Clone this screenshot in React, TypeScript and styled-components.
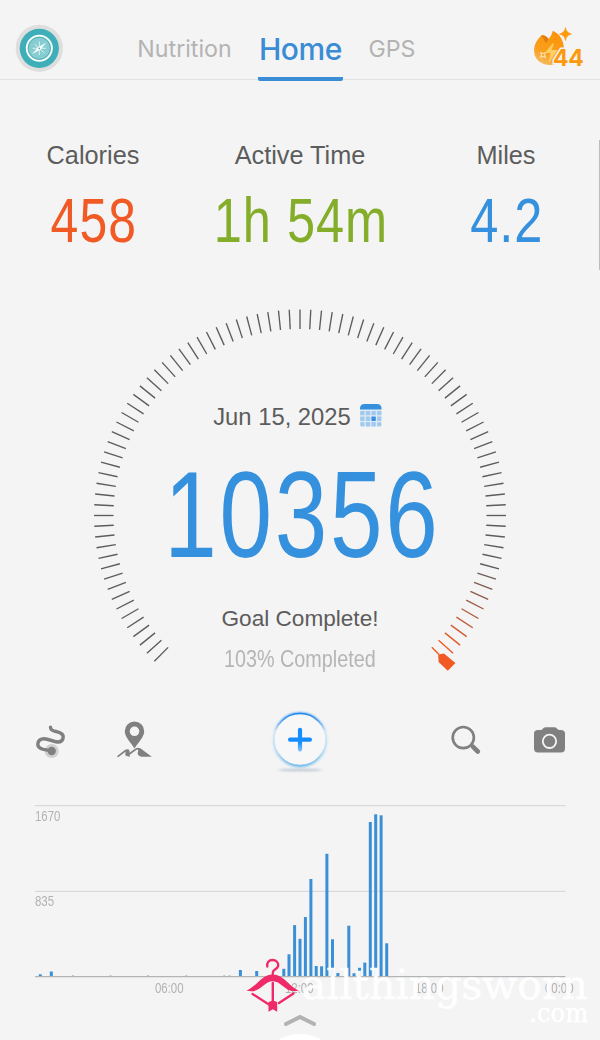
import React from "react";
import styled, { createGlobalStyle } from "styled-components";

const GlobalStyle = createGlobalStyle`
  * { box-sizing: border-box; }
  html, body { margin: 0; padding: 0; background: #f4f4f4; }
  body { font-family: "Liberation Sans", Arial, sans-serif; }
  svg { display: block; }
`;

const Screen = styled.main`
  position: relative;
  width: 600px;
  height: 1040px;
  overflow: hidden;
  background: #f4f4f4;
  display: flex;
  flex-direction: column;
`;

const Header = styled.header`
  height: 80px;
  flex: none;
  display: grid;
  grid-template-columns: 95px 330px 54px;
  justify-content: space-between;
  border-bottom: 1px solid #e2e2e2;
  padding: 0 14px 0 15px;
`;

const AvatarButton = styled.div`
  width: 48px;
  padding-top: 24px;
`;

const Tabs = styled.nav`
  display: flex;
  height: 81px;
  margin-left: -45px;
  font-family: Inter, sans-serif;
`;

const Tab = styled.a<{ $active?: boolean; $width: number }>`
  width: ${(p) => p.$width}px;
  height: 81px;
  display: flex;
  justify-content: center;
  white-space: nowrap;
  line-height: 40px;
  padding-top: 29px;
  font-size: ${(p) => (p.$active ? 30 : 23.2)}px;
  font-weight: ${(p) => (p.$active ? 500 : 400)};
  letter-spacing: ${(p) => (p.$active ? -0.4 : 0)}px;
  color: ${(p) => (p.$active ? "#3a8cd6" : "#b3b3b3")};
  background: ${(p) => (p.$active ? "linear-gradient(#3a8cd6, #3a8cd6) bottom / 100% 4px no-repeat" : "none")};
  border-radius: 2px;
`;

const Streak = styled.div`
  position: relative;
  width: 54px;
  padding-top: 26px;
`;

const StreakCount = styled.span`
  position: absolute;
  left: 21px;
  top: 45px;
  font: 700 23px/26px Inter, sans-serif;
  letter-spacing: -0.2px;
  color: #fb990f;
  -webkit-text-stroke: 3px #f4f4f4;
  paint-order: stroke fill;
`;

const Stats = styled.section`
  display: grid;
  grid-template-columns: 186px 228px 184px;
  padding-top: 60px;
  height: 220px;
  flex: none;
`;

const Stat = styled.div`
  display: flex;
  flex-direction: column;
  align-items: center;
  gap: 18px;
`;

const StatLabel = styled.div`
  font-size: 25.3px;
  line-height: 30px;
  color: #5c5c5c;
  white-space: nowrap;
`;

const Narrow = styled.div<{ $size: number; $line: number; $color: string; $scale?: number; $spacing?: number }>`
  font-size: ${(p) => p.$size}px;
  line-height: ${(p) => p.$line}px;
  height: ${(p) => p.$line}px;
  letter-spacing: ${(p) => p.$spacing ?? 0}px;
  margin-right: ${(p) => -(p.$spacing ?? 0)}px;
  color: ${(p) => p.$color};
  white-space: nowrap;
  transform: scaleX(${(p) => p.$scale ?? 0.83});
`;

const Gauge = styled.section`
  display: grid;
  height: 390px;
  flex: none;
  > * { grid-area: 1 / 1; }
`;

const GaugeText = styled.div`
  display: flex;
  flex-direction: column;
  align-items: center;
  padding-top: 102px;
`;

const DateRow = styled.div`
  display: flex;
  gap: 8px;
  height: 30px;
  font-size: 23.8px;
  line-height: 30px;
  color: #5c5c5c;
  padding-right: 4px;
`;

const GoalText = styled.div`
  font-size: 22.6px;
  line-height: 30px;
  color: #5c5c5c;
  margin: 39px 0 10px;
`;

const StepCount = styled.div`
  padding: 33px 0 0 2px;
`;

const Actions = styled.section`
  display: grid;
  grid-template-columns: 84px 146px 186px 86px 44px;
  align-items: start;
  height: 105px;
  flex: none;
  padding: 30px 0 0 30px;
`;

const ActivityChart = styled.section`
  display: grid;
  height: 205px;
  flex: none;
  > * { grid-area: 1 / 1; }
`;

const YLabels = styled.div`
  padding: 13.5px 0 0 35px;
  display: flex;
  flex-direction: column;
  align-items: flex-start;
  gap: 69.5px;
  > * { transform-origin: left; }
`;

const XLabels = styled.div`
  display: grid;
  grid-template-columns: repeat(4, 130px);
  justify-items: center;
  padding: 186.4px 0 0 104.5px;
`;

const Footer = styled.footer`
  height: 40px;
  flex: none;
`;

const Watermark = styled.div`
  position: absolute;
  left: 245px;
  top: 955px;
  width: 355px;
  height: 80px;
  color: rgba(255, 255, 255, 0.95);
  font-family: "DejaVu Serif", serif;
`;

const WatermarkName = styled.span`
  position: absolute;
  right: 12px;
  top: 5px;
  font-size: 41px;
  line-height: 50px;
  -webkit-text-stroke: 0.5px rgba(255, 255, 255, 0.95);
`;

const WatermarkSuffix = styled.span`
  position: absolute;
  right: 12px;
  top: 42px;
  font-size: 26.5px;
  line-height: 32px;
  transform: scaleX(0.92);
  transform-origin: right;
  -webkit-text-stroke: 0.4px rgba(255, 255, 255, 0.95);
`;

const WatermarkLogo = styled.svg`
  position: absolute;
  left: 0;
  top: 0;
`;

const ScrollThumb = styled.div`
  position: absolute;
  right: 0;
  top: 140px;
  width: 1px;
  height: 130px;
  background: #bcbcbc;
`;

const CompassIcon = () => (
  <svg width="48" height="48" viewBox="0 0 48 48">
    <circle cx="24.3" cy="24.3" r="23.6" fill="#dedede" />
    <circle cx="24.3" cy="24.3" r="19.6" fill="#3eafb8" />
    <circle cx="24.3" cy="24.3" r="12.6" fill="#86cdd1" stroke="#fff" strokeWidth="1.8" />
    <circle cx="24.3" cy="24.3" r="11" fill="none" stroke="#49aeb6" strokeWidth="0.9" />
    <path d="M31.5 18.500 25.500 25.500 17 30.300 23 23.300Z" fill="#fff" opacity=".95" />
    <path d="M19.500 20 29.300 29M24.300 17.500V31M17.800 24.300H30.800" stroke="#fff" strokeWidth=".8" opacity=".9" />
    <circle cx="24.3" cy="24.3" r="0.9" fill="#49aeb6" />
  </svg>
);

const FlameIcon = () => (
  <svg width="54" height="42" viewBox="0 0 54 42">
    <defs>
      <linearGradient id="flame" x1="0.7" y1="0" x2="0.3" y2="1">
        <stop offset="0" stopColor="#fb9208" />
        <stop offset=".65" stopColor="#fb9f1c" />
        <stop offset="1" stopColor="#f3bd63" />
      </linearGradient>
    </defs>
    <path d="M9.500 9.200C5 13.500 1.800 18.600 2.100 25.500c.4 8 7 13.500 16 13.500 9 0 14-7 14-15C32.100 16 28.500 8 20.800 4.800 20 8.500 18.500 11 16.500 13 15 10.500 12.500 9 9.500 9.200Z" fill="url(#flame)" />
    <path d="M9.500 9.200c3-.2 5.500 1.300 7 3.800l-2.500 4Z" fill="#dc7e10" />
    <path d="M20.500 17.500 13 27h5.500l-2 10.500L25.500 24h-6l2.500-6.500Z" fill="#ffcf66" />
    <path d="m8.500 26.500 2.500 1 2.500-1-1 2.500 1 2.500-2.500-1-2.500 1 1-2.500Z" fill="#f9a83a" stroke="#fff0c8" strokeWidth=".9" />
    <path d="M33.500 1.500c.9 3.800 2 5.200 6 6.500-4 1.300-5.100 2.700-6 6.500-.9-3.800-2-5.200-6-6.500 4-1.300 5.100-2.700 6-6.500Z" fill="#fb990f" stroke="#fb990f" strokeWidth=".6" />
  </svg>
);

const CalendarIcon = () => {
  const cells: React.ReactNode[] = [];
  for (let r = 0; r < 3; r++)
    for (let c = 0; c < 4; c++) {
      const corner = r === 2 && (c === 0 || c === 3);
      cells.push(
        <rect key={`${r}-${c}`} x={1.2 + c * 5.6} y={8.9 + r * 5.6} width="4.4" height="4.4" rx={corner ? 1.6 : 0.4}
          fill={r === 1 && c === 2 ? "#3590dd" : "#a3c9ec"} />
      );
    }
  return (
    <svg width="24" height="26" viewBox="0 0 24 26">
      <rect x="1" y="6" width="21.600" height="18.800" rx="4" fill="#deebf7" />
      <path d="M1 7V6.500Q1 2 5.500 2H18Q22.500 2 22.500 6.500V7.500H1Z" fill="#3590dd" />
      {cells}
    </svg>
  );
};

const mix = (t: number) => {
  const from = [92, 92, 92];
  const to = [241, 90, 36];
  return `rgb(${from.map((v, i) => Math.round(v + (to[i] - v) * t)).join(",")})`;
};

const GaugeDial = () => {
  const ticks: React.ReactNode[] = [];
  for (let i = -45; i <= 44; i++) {
    const t = Math.min(1, Math.max(0, (i - 35) / 9));
    ticks.push(
      <line key={i} x1="300" y1="9.500" x2="300" y2="29" stroke={mix(t)} strokeWidth="1.350" transform={`rotate(${i * 3} 300 215.500)`} />
    );
  }
  return (
    <svg width="600" height="390" viewBox="0 0 600 390">
      {ticks}
      <path d="M431.800 347.300 439 354.500" stroke="#f15a24" strokeWidth="1.400" />
      <path d="M438.200 354.500 444 353.400 455.400 363 447.800 370.800 438.600 362Z" fill="#f15a24" />
    </svg>
  );
};

const RouteIcon = () => (
  <svg width="44" height="60" viewBox="0 0 44 60">
    <circle cx="21.700" cy="31" r="7" fill="#d0d0d0" />
    <path d="M20.500 7.300c.3 3 2.500 3.600 5.500 4.200 5 1 8 3 7 7-1 3.700-4 4-8 3l-7-2c-5-1.500-9-.5-10 3.300-.9 4 1.800 5.700 5.500 6.500l8 1.500" fill="none" stroke="#808080" strokeWidth="3.400" strokeLinecap="round" />
    <circle cx="21.700" cy="31" r="4.200" fill="#808080" />
  </svg>
);

const PinIcon = () => (
  <svg width="44" height="60" viewBox="0 0 44 60">
    <g transform="translate(-4 -10)">
      <path fillRule="evenodd" d="M24.500 11.500a9.700 9.700 0 0 0-9.700 9.700c0 6 6 11 9.700 17.300 3.700-6.300 9.700-11.300 9.700-17.300a9.700 9.700 0 0 0-9.700-9.700Zm0 5a4.800 4.800 0 1 1 0 9.600 4.800 4.800 0 0 1 0-9.600Z" fill="#808080" />
      <path d="M8 46.300 15 41c2.500-1.800 3.800-.8 3.800.5 0 1.700-1.600 3.500.2 4.500M18.500 44.500 25.500 39.500c2-1.500 4-1.200 6 .5" fill="none" stroke="#808080" strokeWidth="1.600" strokeLinecap="round" />
      <path d="M15 41c2.500-1.500 4-.5 3.600 1-.5 1.700-.7 3 1.700 3.500-2.500 1.500-5.300.7-5-1.500.1-1.500.7-2-.3-3ZM27 39c3-1 4.500 0 7 2l7.800 5.800H31c-3-1-4-3-3-5 .4-1.300.3-2-1-2.800Z" fill="#808080" />
    </g>
  </svg>
);

const AddButton = () => (
  <svg width="80" height="70" viewBox="0 0 80 70" overflow="visible">
    <defs>
      <linearGradient id="ring" x1="0" y1="0" x2="0" y2="1">
        <stop offset="0" stopColor="#2388ee" />
        <stop offset=".12" stopColor="#4b9ff0" />
        <stop offset=".35" stopColor="#d3e6f5" />
        <stop offset=".7" stopColor="#bfe0f3" />
        <stop offset="1" stopColor="#7fc0ea" />
      </linearGradient>
      <linearGradient id="plus" x1="0" y1="8" x2="0" y2="32" gradientUnits="userSpaceOnUse">
        <stop offset="0" stopColor="#148cff" />
        <stop offset=".6" stopColor="#168fff" />
        <stop offset="1" stopColor="#8cc8fb" />
      </linearGradient>
      <filter id="soft" x="-30%" y="-30%" width="160%" height="160%"><feGaussianBlur stdDeviation="1.200" /></filter>
      <filter id="shade" x="-30%" y="-200%" width="160%" height="500%"><feGaussianBlur stdDeviation="2.500 0.800" /></filter>
    </defs>
    <ellipse cx="40" cy="50" rx="22" ry="1.300" fill="#9bacbf" opacity=".6" filter="url(#shade)" />
    <circle cx="40" cy="20" r="26" fill="#f7f7f7" stroke="url(#ring)" strokeWidth="2.800" filter="url(#soft)" />
    <circle cx="40" cy="19.500" r="26" fill="#f7f7f7" stroke="url(#ring)" strokeWidth="1.500" />
    <rect x="28" y="17.600" width="24" height="4.200" rx="2.100" fill="#148cff" />
    <rect x="37.900" y="7.700" width="4.200" height="24" rx="2.100" fill="url(#plus)" />
  </svg>
);

const SearchIcon = () => (
  <svg width="44" height="60" viewBox="0 0 44 60">
    <circle cx="17.300" cy="17.600" r="10.600" fill="none" stroke="#808080" strokeWidth="2.700" />
    <path d="m24.600 24.500 1.500 1.500" stroke="#808080" strokeWidth="2.500" />
    <path d="m27.100 26.800 4.700 4.700" stroke="#808080" strokeWidth="4.600" strokeLinecap="round" />
  </svg>
);

const CameraIcon = () => (
  <svg width="44" height="60" viewBox="0 0 44 60">
    <g transform="translate(-2 -10)">
      <path d="M8 42.500q-4 0-4-4V23.500q0-3.500 4-3.500h2.500q1.500 0 2.500-1.500 1-1.300 3-1.300h8q2 0 3 1.300 1 1.500 2.500 1.500H31q4 0 4 3.500v15q0 4-4 4Z" fill="#808080" />
      <circle cx="19.500" cy="31.300" r="6.700" fill="#808080" stroke="#f4f4f4" strokeWidth="1.800" />
    </g>
  </svg>
);

const bars: [number, number][] = [
  [40.3, 2], [51.3, 4.800], [240.4, 6.300], [256.700, 5.300], [283.800, 7.500], [289, 22], [294.600, 51.200], [300, 37.500],
  [305.400, 59.300], [310.900, 97.300], [316.200, 10.300], [321.600, 10], [326.900, 122.500], [332.500, 37], [337.900, 3.300],
  [348.800, 50.600], [354, 3], [359.500, 8.500], [364.800, 13.700], [370.300, 154.300], [375.700, 162], [381.100, 161], [386.700, 33],
];

const BarPlot = () => (
  <svg width="600" height="205" viewBox="0 0 600 205">
    <path d="M35 10.600H565.500M35 96.300H565.500" stroke="#d9d9d9" strokeWidth="1.200" />
    {bars.map(([x, h]) => (
      <rect key={x} x={x - 1.5} y={181.300 - h} width="3" height={h} fill="#3b8fd6" />
    ))}
    <path d="M35 181.600H565.500" stroke="#b2b5b8" strokeWidth="1.200" />
    {[73, 110.5, 148, 186.3, 224.3, 229.5].map((x) => (
      <rect key={x} x={x - 1} y="180.300" width="2" height="1.500" fill="#a9b4bd" />
    ))}
  </svg>
);

const HangerLogo = () => (
  <WatermarkLogo width="60" height="60" viewBox="0 0 60 60">
    <g fill="none" stroke="#ee2a68" strokeLinecap="round">
      <path d="M22.300 11.500C21.600 7.500 24 5 27.500 5c3.500 0 5.700 2.300 5.700 5.200 0 4.300-5.400 3.800-5.400 7.300v3" strokeWidth="2.300" />
      <path d="M27.800 28V48" strokeWidth="2.400" />
      <path d="M7.500 39 23.500 49.300M48.500 38.500 34 48" strokeWidth="2.300" />
    </g>
    <path d="M1.500 35.500C12 31.500 16.500 19.500 27.800 19.500S43.500 31.500 54 35.500C40.500 39.500 37.500 26.300 27.800 26.300S15 39.500 1.500 35.500Z" fill="#ee2a68" />
    <path d="M23.500 47 27.800 45.500l4.400 1.500V56.700l-4.400-2.400-4.300 2.400Z" fill="#ee2a68" />
  </WatermarkLogo>
);

export default function App() {
  return (
    <>
      <GlobalStyle />
      <Screen>
        <Header>
          <AvatarButton><CompassIcon /></AvatarButton>
          <Tabs>
            <Tab $width={147}>Nutrition</Tab>
            <Tab $active $width={85}>Home</Tab>
            <Tab $width={98}>GPS</Tab>
          </Tabs>
          <Streak>
            <FlameIcon />
            <StreakCount>44</StreakCount>
          </Streak>
        </Header>

        <Stats>
          <Stat>
            <StatLabel>Calories</StatLabel>
            <Narrow $size={63.2} $line={64} $scale={0.79} $spacing={1.4} $color="#f15a24">458</Narrow>
          </Stat>
          <Stat>
            <StatLabel>Active Time</StatLabel>
            <Narrow $size={63.2} $line={64} $scale={0.8} $spacing={1.2} $color="#84ae2a">1h 54m</Narrow>
          </Stat>
          <Stat>
            <StatLabel>Miles</StatLabel>
            <Narrow $size={63.2} $line={64} $scale={0.8} $spacing={1.2} $color="#3590dd">4.2</Narrow>
          </Stat>
        </Stats>

        <Gauge>
          <GaugeDial />
          <GaugeText>
            <DateRow>
              <span>Jun 15, 2025</span>
              <CalendarIcon />
            </DateRow>
            <StepCount>
              <Narrow $size={121.8} $line={100} $scale={0.775} $spacing={3.6} $color="#3590dd">10356</Narrow>
            </StepCount>
            <GoalText>Goal Complete!</GoalText>
            <Narrow $size={23.7} $line={30} $scale={0.835} $color="#b5b5b5">103% Completed</Narrow>
          </GaugeText>
        </Gauge>

        <Actions>
          <RouteIcon />
          <PinIcon />
          <AddButton />
          <SearchIcon />
          <CameraIcon />
        </Actions>

        <ActivityChart>
          <BarPlot />
          <YLabels>
            <Narrow $size={13.8} $line={16} $color="#b2b2b2">1670</Narrow>
            <Narrow $size={13.8} $line={16} $color="#b2b2b2">835</Narrow>
          </YLabels>
          <XLabels>
            {["06:00", "12:00", "18:00", "00:00"].map((t) => (
              <Narrow key={t} $size={13.8} $line={16} $color="#b2b2b2">{t}</Narrow>
            ))}
          </XLabels>
        </ActivityChart>

        <Footer>
          <svg width="600" height="40" viewBox="0 0 600 40">
            <path d="M286 24 300 17 314 24" fill="none" stroke="#b2b2b2" strokeWidth="4" strokeLinecap="round" />
            <circle cx="300" cy="77" r="43" fill="#fff" />
          </svg>
        </Footer>

        <Watermark>
          <HangerLogo />
          <WatermarkName>allthingsworn</WatermarkName>
          <WatermarkSuffix>.com</WatermarkSuffix>
        </Watermark>
        <ScrollThumb />
      </Screen>
    </>
  );
}
